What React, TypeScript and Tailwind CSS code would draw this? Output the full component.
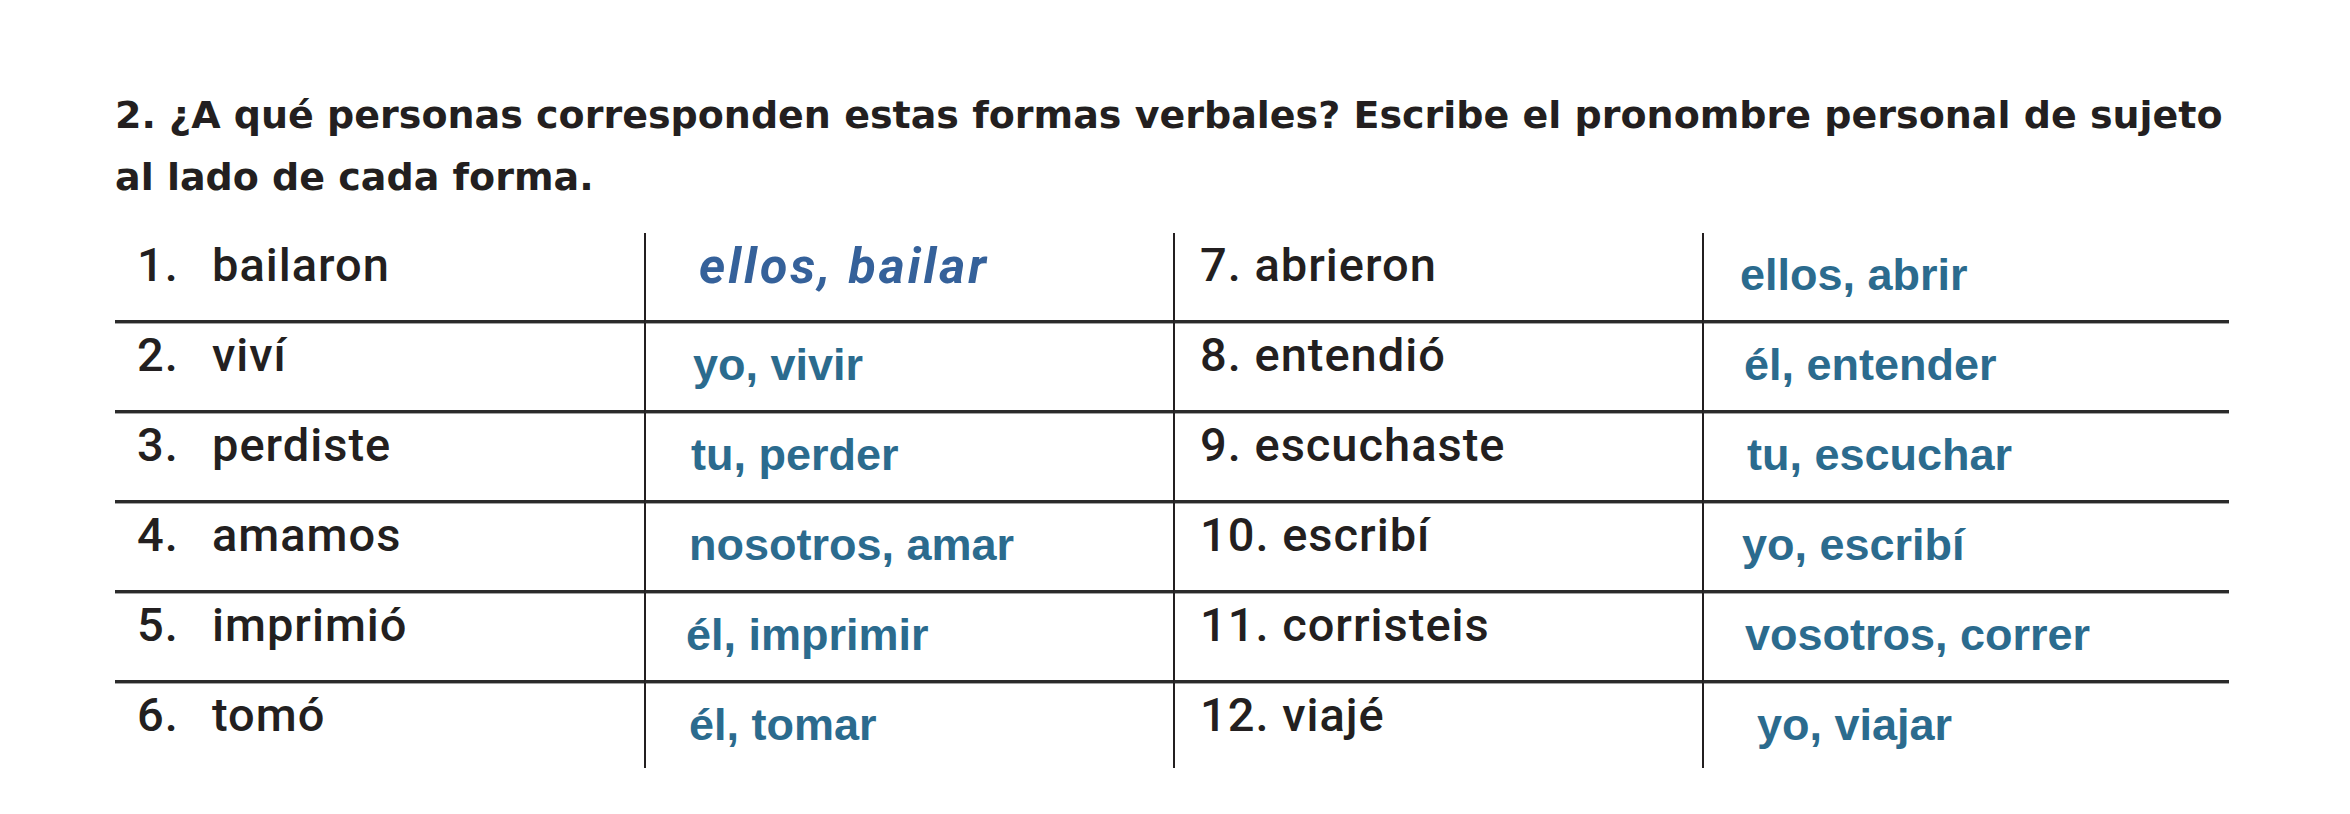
const rows = [
  {
    n: "1.",
    verb: "bailaron",
    a: "ellos, bailar",
    aPad: "pl-[53px]",
    italic: true,
    n2: "7. abrieron",
    b: "ellos, abrir",
    bPad: "pl-[36px]",
  },
  { n: "2.", verb: "viví", a: "yo, vivir", aPad: "pl-[47px]", n2: "8. entendió", b: "él, entender", bPad: "pl-[40px]" },
  { n: "3.", verb: "perdiste", a: "tu, perder", aPad: "pl-[45px]", n2: "9. escuchaste", b: "tu, escuchar", bPad: "pl-[43px]" },
  { n: "4.", verb: "amamos", a: "nosotros, amar", aPad: "pl-[43px]", n2: "10. escribí", b: "yo, escribí", bPad: "pl-[38px]" },
  { n: "5.", verb: "imprimió", a: "él, imprimir", aPad: "pl-[40px]", n2: "11. corristeis", b: "vosotros, correr", bPad: "pl-[41px]" },
  { n: "6.", verb: "tomó", a: "él, tomar", aPad: "pl-[43px]", n2: "12. viajé", b: "yo, viajar", bPad: "pl-[53px]" },
];

const din = "font-['Roboto',sans-serif] font-medium text-[47px] leading-none tracking-[1px] text-[#231f20]";
const answer = "font-['Liberation_Sans',Arial,sans-serif] font-bold text-[45px] leading-none text-[#2b6b8e] whitespace-nowrap";

export default function App() {
  return (
    <div className="w-[2350px] h-[814px] bg-white overflow-hidden">
      <div className="pl-[115px] pt-[84px] font-['DejaVu_Sans',sans-serif] font-bold text-[38px] leading-[62px] text-[#231f20]">
        <p className="whitespace-nowrap">
          2. ¿A qué personas corresponden estas formas verbales? Escribe el pronombre personal de sujeto
        </p>
        <p className="whitespace-nowrap">al lado de cada forma.</p>
      </div>

      <div className="ml-[115px] mt-[25px] grid grid-cols-[529px_529px_529px_527px]">
        {rows.map((r, i) => {
          const last = i === rows.length - 1;
          const rowCls = last
            ? "h-[85px]"
            : "h-[90px] border-b-[3px] border-[#2b2b2b] shadow-[0_1px_0_#a3a3a3]";
          return (
            <div key={r.n} className="contents">
              <div className={`${rowCls} pt-[8px] pl-[22px] flex ${din}`}>
                <span className="w-[75px]">{r.n}</span>
                <span>{r.verb}</span>
              </div>
              <div className={`${rowCls} border-l-2 border-l-[#231f20] ${r.aPad}`}>
                {r.italic ? (
                  <div className="pt-[8px] font-['Roboto',sans-serif] font-bold italic text-[50px] leading-none tracking-[3px] text-[#35619a] whitespace-nowrap">
                    {r.a}
                  </div>
                ) : (
                  <div className={`pt-[19px] ${answer}`}>{r.a}</div>
                )}
              </div>
              <div className={`${rowCls} border-l-2 border-l-[#231f20] pt-[8px] pl-[25px] ${din}`}>
                {r.n2}
              </div>
              <div className={`${rowCls} border-l-2 border-l-[#231f20] ${r.bPad}`}>
                <div className={`pt-[19px] ${answer}`}>{r.b}</div>
              </div>
            </div>
          );
        })}
      </div>
    </div>
  );
}
